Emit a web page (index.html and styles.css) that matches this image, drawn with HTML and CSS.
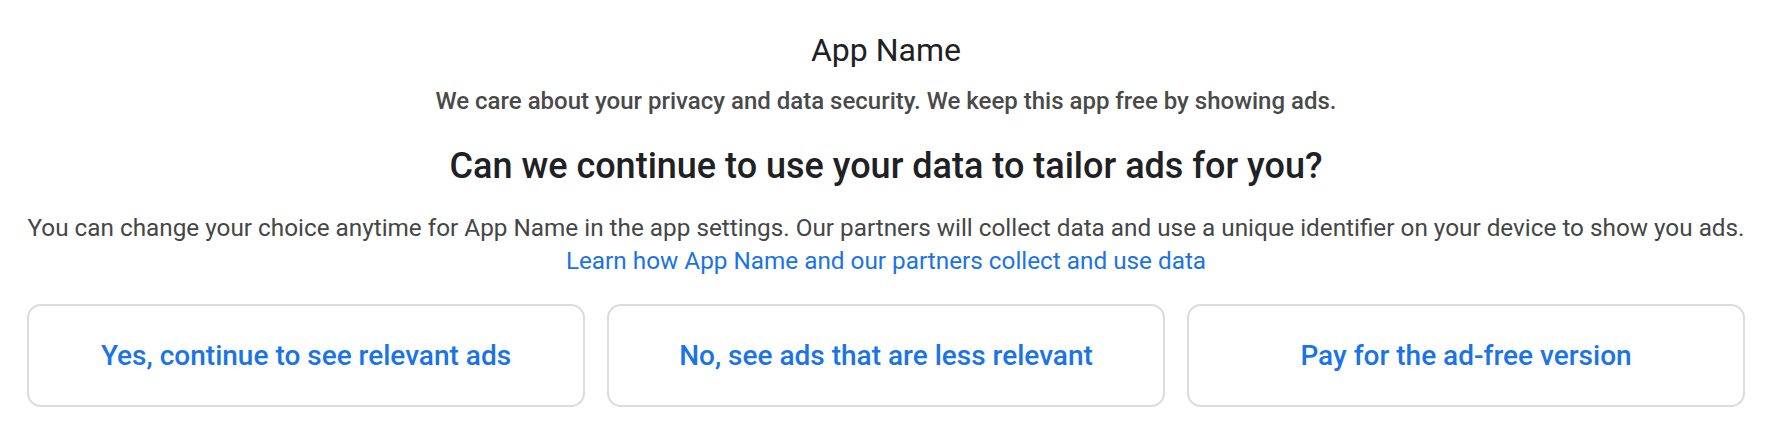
FILE: index.html
```html
<!DOCTYPE html>
<html lang="en">
<head>
<meta charset="utf-8">
<title>Consent</title>
<link rel="stylesheet" href="styles.css">
</head>
<body>
<main class="consent">
  <h1 class="app-name">App Name</h1>
  <p class="subtitle">We care about your privacy and data security. We keep this app free by showing ads.</p>
  <h2 class="question">Can we continue to use your data to tailor ads for you?</h2>
  <p class="body-text">You can change your choice anytime for App Name in the app settings. Our partners will collect data and use a unique identifier on your device to show you ads.<br><a class="learn" href="#">Learn how App Name and our partners collect and use data</a></p>
  <div class="choices">
    <button class="choice" type="button">Yes, continue to see relevant ads</button>
    <button class="choice" type="button">No, see ads that are less relevant</button>
    <button class="choice" type="button">Pay for the ad-free version</button>
  </div>
</main>
</body>
</html>
```
FILE: styles.css
```css
html, body {
  margin: 0;
  padding: 0;
  background: #ffffff;
}
body {
  font-family: Roboto, "Noto Sans", Arial, sans-serif;
  color: #202124;
}
.consent {
  display: flex;
  flex-direction: column;
  align-items: stretch;
  text-align: center;
  padding: 32px 23px 0 27px;
}
.app-name {
  margin: 0;
  font-size: 32px;
  line-height: 36px;
  font-weight: 400;
  color: #202124;
}
.subtitle {
  margin: 19px 0 0 0;
  font-size: 24px;
  line-height: 28px;
  font-weight: 500;
  color: #4a4a4a;
}
.question {
  margin: 31px 0 0 0;
  font-size: 36px;
  line-height: 40px;
  font-weight: 500;
  color: #202124;
}
.body-text {
  margin: 25px 0 0 0;
  font-size: 24.3px;
  line-height: 33px;
  font-weight: 400;
  color: #444746;
}
.learn {
  color: #1a73e8;
  text-decoration: none;
}
.choices {
  margin-top: 27px;
  display: grid;
  grid-template-columns: repeat(3, 1fr);
  gap: 22px;
}
.choice {
  box-sizing: border-box;
  height: 103px;
  border: 2px solid #dcdce0;
  border-radius: 14px;
  background: #ffffff;
  font-family: Roboto, "Noto Sans", Arial, sans-serif;
  font-size: 28px;
  font-weight: 500;
  color: #1a73e8;
  padding: 0;
  cursor: pointer;
}
```
